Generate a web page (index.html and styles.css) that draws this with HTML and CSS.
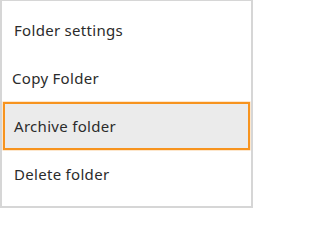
FILE: index.html
```html
<!DOCTYPE html>
<html>
<head>
<meta charset="utf-8">
<link rel="stylesheet" href="styles.css">
</head>
<body>
<ul class="menu">
  <li class="menu-item">Folder settings</li>
  <li class="menu-item menu-item--tight">Copy Folder</li>
  <li class="menu-item menu-item--active">Archive folder</li>
  <li class="menu-item">Delete folder</li>
</ul>
</body>
</html>
```
FILE: styles.css
```css
html, body {
  margin: 0;
  padding: 0;
  background: #ffffff;
}

.menu {
  box-sizing: border-box;
  width: 253px;
  height: 208px;
  margin: 0;
  padding: 5px 1px 8px 1px;
  list-style: none;
  border: 2px solid #d6d6d6;
  border-top-width: 1px;
  background: #ffffff;
  font-family: "Noto Sans", "Open Sans", sans-serif;
  font-size: 15px;
  color: #2b2b2b;
}

.menu-item {
  box-sizing: border-box;
  height: 48px;
  display: flex;
  align-items: center;
  padding-left: 9px;
  border: 2px solid transparent;
  letter-spacing: 0.3px;
}

.menu-item--tight {
  padding-left: 7px;
}

.menu-item--active {
  background: #ebebeb;
  border-color: #f7931e;
  box-shadow: 0 0 0 0.5px rgba(247, 147, 30, 0.45);
}
```
